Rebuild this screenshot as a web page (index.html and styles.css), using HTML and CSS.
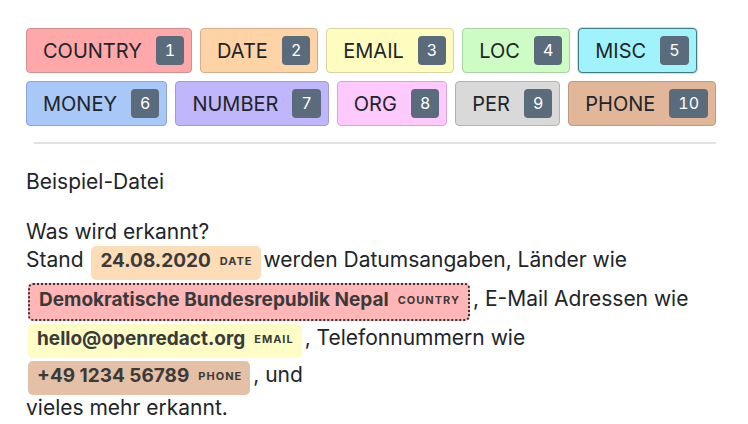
FILE: index.html
```html
<!DOCTYPE html>
<html lang="de">
<head>
<meta charset="utf-8">
<title>OpenRedact</title>
<link rel="stylesheet" href="styles.css">
</head>
<body>
<div class="page">
  <div class="tags">
    <button class="tag t-country">COUNTRY <span class="badge">1</span></button>
    <button class="tag t-date">DATE <span class="badge">2</span></button>
    <button class="tag t-email">EMAIL <span class="badge">3</span></button>
    <button class="tag t-loc">LOC <span class="badge">4</span></button>
    <button class="tag t-misc">MISC <span class="badge">5</span></button>
    <button class="tag t-money">MONEY <span class="badge">6</span></button>
    <button class="tag t-number">NUMBER <span class="badge">7</span></button>
    <button class="tag t-org">ORG <span class="badge">8</span></button>
    <button class="tag t-per">PER <span class="badge">9</span></button>
    <button class="tag t-phone">PHONE <span class="badge">10</span></button>
  </div>
  <hr class="divider">
  <p class="para">Beispiel-Datei</p>
  <p class="para">Was wird erkannt?<br>Stand <mark class="ent m-date">24.08.2020<span class="lbl">DATE</span></mark>werden Datumsangaben, Länder wie <mark class="ent m-country">Demokratische Bundesrepublik Nepal<span class="lbl">COUNTRY</span></mark>, E-Mail Adressen wie <mark class="ent m-email">hello@openredact.org<span class="lbl">EMAIL</span></mark>, Telefonnummern wie <mark class="ent m-phone">+49 1234 56789<span class="lbl">PHONE</span></mark>, und<br>vieles mehr erkannt.</p>
</div>
</body>
</html>
```

FILE: styles.css
```css
html, body {
  margin: 0;
  padding: 0;
  background: #ffffff;
}

body {
  font-family: Inter, "Noto Sans", sans-serif;
  color: #212529;
}

.page {
  width: 700px;
  padding: 28px 0 0 26px;
}

.tags {
  display: flex;
  flex-wrap: wrap;
  gap: 8px;
}

.tag {
  display: inline-flex;
  align-items: center;
  gap: 14px;
  font-family: Inter, "Noto Sans", sans-serif;
  font-size: 20px;
  line-height: 24px;
  color: #212529;
  padding: 7px 7px 7px 16px;
  border: 1px solid;
  border-radius: 4px;
  cursor: pointer;
}

.badge {
  display: inline-block;
  background: #5a6c7c;
  color: #ffffff;
  font-size: 16px;
  line-height: 19px;
  padding: 5px 9px;
  border-radius: 4px;
  font-variant-numeric: tabular-nums;
}

.t-country { background: #ffa8a9; border-color: #d48f90; }
.t-date    { background: #fed4a7; border-color: #d6b08c; }
.t-email   { background: #fefdbf; border-color: #d6d4a0; }
.t-loc     { background: #cdfcc5; border-color: #a8d2a2; }
.t-misc    { background: #a1f3fb; border-color: #3f7d86; box-shadow: 0 0 0 1px rgba(63, 125, 134, 0.25); }
.t-money   { background: #a8c8f8; border-color: #89a6d2; }
.t-number  { background: #c0b6fb; border-color: #a299d6; }
.t-org     { background: #fec9fd; border-color: #d6a8d4; }
.t-per     { background: #d9d9d9; border-color: #b3b3b3; }
.t-phone   { background: #e2b799; border-color: #bf9a80; }

.divider {
  border: 0;
  border-top: 2px solid #e2e2e2;
  width: 682px;
  margin: 16px 0 0 8px;
}

.para {
  margin: 26px 0 0;
  width: 690px;
  font-size: 21px;
  line-height: 24px;
}

.ent {
  display: inline-block;
  color: #3a3a3a;
  font-weight: 700;
  font-size: 19px;
  line-height: 23px;
  padding: 3px 8px 7px 9px;
  margin: 1.5px 3px 1.5px 2px;
  border-radius: 5px;
}

.lbl {
  font-size: 11px;
  font-weight: 700;
  letter-spacing: 1px;
  margin-left: 9px;
  vertical-align: 2px;
  color: #3a3a3a;
}

.m-date    { background: #fddcb8; }
.m-country { background: #ffb6b6; border: 2px dotted #333333; }
.m-email   { background: #fefdc6; }
.m-phone   { background: #e4c0a6; }
```
